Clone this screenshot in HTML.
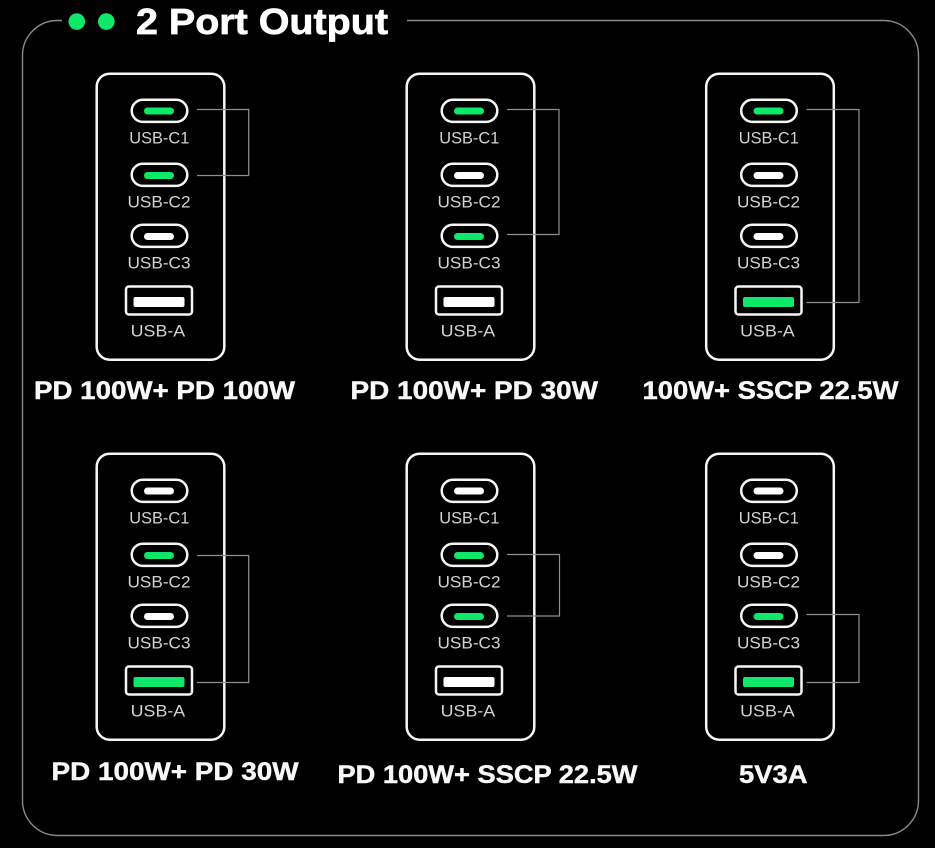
<!DOCTYPE html>
<html>
<head>
<meta charset="utf-8">
<style>
html,body{margin:0;padding:0;background:#000;width:935px;height:848px;overflow:hidden}
svg{display:block;filter:blur(.35px)}
text{font-family:"Liberation Sans",sans-serif}
.t{font-weight:700;font-size:36px;fill:#fff;stroke:#fff;stroke-width:.7}
.cap{font-weight:700;font-size:25px;fill:#f8f8f8;stroke:#f8f8f8;stroke-width:.45}
.l{font-size:16.5px;fill:#d2d2d2}
.card{fill:none;stroke:#f6f6f6;stroke-width:2.5}
.p{fill:none;stroke:#f6f6f6;stroke-width:2.5}
.w{fill:#fff}
.g{fill:#0de868}
.c{fill:none;stroke:#8f8f8f;stroke-width:1.2}
</style>
</head>
<body>
<svg width="935" height="848" viewBox="0 0 935 848" xmlns="http://www.w3.org/2000/svg">
<rect width="935" height="848" fill="#000"/>
<path d="M62 20.500H57.500A35 35 0 0 0 22.500 55.500V800.500A35 35 0 0 0 57.500 835.500H883.500A35 35 0 0 0 918.500 800.500V55.500A35 35 0 0 0 883.500 20.500H407" fill="none" stroke="#8a8a8a" stroke-width="1.4"/>
<circle cx="76.800" cy="21.600" r="8.300" fill="#0de868"/>
<circle cx="106.300" cy="21.600" r="8.300" fill="#0de868"/>
<text class="t" x="136" y="34" textLength="252" lengthAdjust="spacingAndGlyphs">2 Port Output</text>

<!-- Card 1 -->
<g>
<rect class="card" x="96.700" y="73.700" width="127.600" height="286" rx="13"/>
<rect class="p" x="131.700" y="99.700" width="55.600" height="22.200" rx="11.100"/><rect class="g" x="144" y="107.500" width="30" height="7" rx="3.500"/>
<rect class="p" x="131.700" y="163.700" width="55.600" height="22.200" rx="11.100"/><rect class="g" x="144" y="172" width="30" height="7" rx="3.500"/>
<rect class="p" x="131.700" y="224.700" width="55.600" height="22.200" rx="11.100"/><rect class="w" x="144" y="233" width="30" height="7" rx="3.500"/>
<rect class="p" x="126" y="286.500" width="66" height="28" rx="3"/><rect class="w" x="133.500" y="297" width="51" height="10" rx="2"/>
<text class="l" x="129.300" y="143.700" textLength="60" lengthAdjust="spacingAndGlyphs">USB-C1</text>
<text class="l" x="127.500" y="207.500" textLength="63" lengthAdjust="spacingAndGlyphs">USB-C2</text>
<text class="l" x="127.500" y="268.700" textLength="63" lengthAdjust="spacingAndGlyphs">USB-C3</text>
<text class="l" x="130.700" y="336.700" textLength="54.500" lengthAdjust="spacingAndGlyphs">USB-A</text>
<path class="c" d="M197 109.500H248.700V175.500H197"/>
<text class="cap" x="34" y="399" textLength="261" lengthAdjust="spacingAndGlyphs">PD 100W+ PD 100W</text>
</g>

<!-- Card 2 -->
<g transform="translate(310 0)">
<rect class="card" x="96.700" y="73.700" width="127.600" height="286" rx="13"/>
<rect class="p" x="131.700" y="99.700" width="55.600" height="22.200" rx="11.100"/><rect class="g" x="144" y="107.500" width="30" height="7" rx="3.500"/>
<rect class="p" x="131.700" y="163.700" width="55.600" height="22.200" rx="11.100"/><rect class="w" x="144" y="172" width="30" height="7" rx="3.500"/>
<rect class="p" x="131.700" y="224.700" width="55.600" height="22.200" rx="11.100"/><rect class="g" x="144" y="233" width="30" height="7" rx="3.500"/>
<rect class="p" x="126" y="286.500" width="66" height="28" rx="3"/><rect class="w" x="133.500" y="297" width="51" height="10" rx="2"/>
<text class="l" x="129.300" y="143.700" textLength="60" lengthAdjust="spacingAndGlyphs">USB-C1</text>
<text class="l" x="127.500" y="207.500" textLength="63" lengthAdjust="spacingAndGlyphs">USB-C2</text>
<text class="l" x="127.500" y="268.700" textLength="63" lengthAdjust="spacingAndGlyphs">USB-C3</text>
<text class="l" x="130.700" y="336.700" textLength="54.500" lengthAdjust="spacingAndGlyphs">USB-A</text>
<path class="c" d="M197 109.500H249V234.500H197"/>
<text class="cap" x="40.500" y="399" textLength="247.500" lengthAdjust="spacingAndGlyphs">PD 100W+ PD 30W</text>
</g>

<!-- Card 3 -->
<g transform="translate(609.500 0)">
<rect class="card" x="96.700" y="73.700" width="127.600" height="286" rx="13"/>
<rect class="p" x="131.700" y="99.700" width="55.600" height="22.200" rx="11.100"/><rect class="g" x="144" y="107.500" width="30" height="7" rx="3.500"/>
<rect class="p" x="131.700" y="163.700" width="55.600" height="22.200" rx="11.100"/><rect class="w" x="144" y="172" width="30" height="7" rx="3.500"/>
<rect class="p" x="131.700" y="224.700" width="55.600" height="22.200" rx="11.100"/><rect class="w" x="144" y="233" width="30" height="7" rx="3.500"/>
<rect class="p" x="126" y="286.500" width="66" height="28" rx="3"/><rect class="g" x="133.500" y="297" width="51" height="10" rx="2"/>
<text class="l" x="129.300" y="143.700" textLength="60" lengthAdjust="spacingAndGlyphs">USB-C1</text>
<text class="l" x="127.500" y="207.500" textLength="63" lengthAdjust="spacingAndGlyphs">USB-C2</text>
<text class="l" x="127.500" y="268.700" textLength="63" lengthAdjust="spacingAndGlyphs">USB-C3</text>
<text class="l" x="130.700" y="336.700" textLength="54.500" lengthAdjust="spacingAndGlyphs">USB-A</text>
<path class="c" d="M197 109.500H249.500V302.500H197"/>
<text class="cap" x="33" y="399" textLength="256" lengthAdjust="spacingAndGlyphs">100W+ SSCP 22.5W</text>
</g>

<!-- Card 4 -->
<g transform="translate(0 380)">
<rect class="card" x="96.700" y="73.700" width="127.600" height="286" rx="13"/>
<rect class="p" x="131.700" y="99.700" width="55.600" height="22.200" rx="11.100"/><rect class="w" x="144" y="107.500" width="30" height="7" rx="3.500"/>
<rect class="p" x="131.700" y="163.700" width="55.600" height="22.200" rx="11.100"/><rect class="g" x="144" y="172" width="30" height="7" rx="3.500"/>
<rect class="p" x="131.700" y="224.700" width="55.600" height="22.200" rx="11.100"/><rect class="w" x="144" y="233" width="30" height="7" rx="3.500"/>
<rect class="p" x="126" y="286.500" width="66" height="28" rx="3"/><rect class="g" x="133.500" y="297" width="51" height="10" rx="2"/>
<text class="l" x="129.300" y="143.700" textLength="60" lengthAdjust="spacingAndGlyphs">USB-C1</text>
<text class="l" x="127.500" y="207.500" textLength="63" lengthAdjust="spacingAndGlyphs">USB-C2</text>
<text class="l" x="127.500" y="268.700" textLength="63" lengthAdjust="spacingAndGlyphs">USB-C3</text>
<text class="l" x="130.700" y="336.700" textLength="54.500" lengthAdjust="spacingAndGlyphs">USB-A</text>
<path class="c" d="M197 175.500H248.700V302.500H197"/>
<text class="cap" x="51.500" y="400" textLength="247" lengthAdjust="spacingAndGlyphs">PD 100W+ PD 30W</text>
</g>

<!-- Card 5 -->
<g transform="translate(310 380)">
<rect class="card" x="96.700" y="73.700" width="127.600" height="286" rx="13"/>
<rect class="p" x="131.700" y="99.700" width="55.600" height="22.200" rx="11.100"/><rect class="w" x="144" y="107.500" width="30" height="7" rx="3.500"/>
<rect class="p" x="131.700" y="163.700" width="55.600" height="22.200" rx="11.100"/><rect class="g" x="144" y="172" width="30" height="7" rx="3.500"/>
<rect class="p" x="131.700" y="224.700" width="55.600" height="22.200" rx="11.100"/><rect class="g" x="144" y="233" width="30" height="7" rx="3.500"/>
<rect class="p" x="126" y="286.500" width="66" height="28" rx="3"/><rect class="w" x="133.500" y="297" width="51" height="10" rx="2"/>
<text class="l" x="129.300" y="143.700" textLength="60" lengthAdjust="spacingAndGlyphs">USB-C1</text>
<text class="l" x="127.500" y="207.500" textLength="63" lengthAdjust="spacingAndGlyphs">USB-C2</text>
<text class="l" x="127.500" y="268.700" textLength="63" lengthAdjust="spacingAndGlyphs">USB-C3</text>
<text class="l" x="130.700" y="336.700" textLength="54.500" lengthAdjust="spacingAndGlyphs">USB-A</text>
<path class="c" d="M197 174.500H249.500V236H197"/>
<text class="cap" x="27.500" y="403" textLength="300" lengthAdjust="spacingAndGlyphs">PD 100W+ SSCP 22.5W</text>
</g>

<!-- Card 6 -->
<g transform="translate(609.500 380)">
<rect class="card" x="96.700" y="73.700" width="127.600" height="286" rx="13"/>
<rect class="p" x="131.700" y="99.700" width="55.600" height="22.200" rx="11.100"/><rect class="w" x="144" y="107.500" width="30" height="7" rx="3.500"/>
<rect class="p" x="131.700" y="163.700" width="55.600" height="22.200" rx="11.100"/><rect class="w" x="144" y="172" width="30" height="7" rx="3.500"/>
<rect class="p" x="131.700" y="224.700" width="55.600" height="22.200" rx="11.100"/><rect class="g" x="144" y="233" width="30" height="7" rx="3.500"/>
<rect class="p" x="126" y="286.500" width="66" height="28" rx="3"/><rect class="g" x="133.500" y="297" width="51" height="10" rx="2"/>
<text class="l" x="129.300" y="143.700" textLength="60" lengthAdjust="spacingAndGlyphs">USB-C1</text>
<text class="l" x="127.500" y="207.500" textLength="63" lengthAdjust="spacingAndGlyphs">USB-C2</text>
<text class="l" x="127.500" y="268.700" textLength="63" lengthAdjust="spacingAndGlyphs">USB-C3</text>
<text class="l" x="130.700" y="336.700" textLength="54.500" lengthAdjust="spacingAndGlyphs">USB-A</text>
<path class="c" d="M197 234.500H249.500V302.500H197"/>
<text class="cap" x="129.500" y="403" textLength="68.500" lengthAdjust="spacingAndGlyphs">5V3A</text>
</g>
</svg>
</body>
</html>
